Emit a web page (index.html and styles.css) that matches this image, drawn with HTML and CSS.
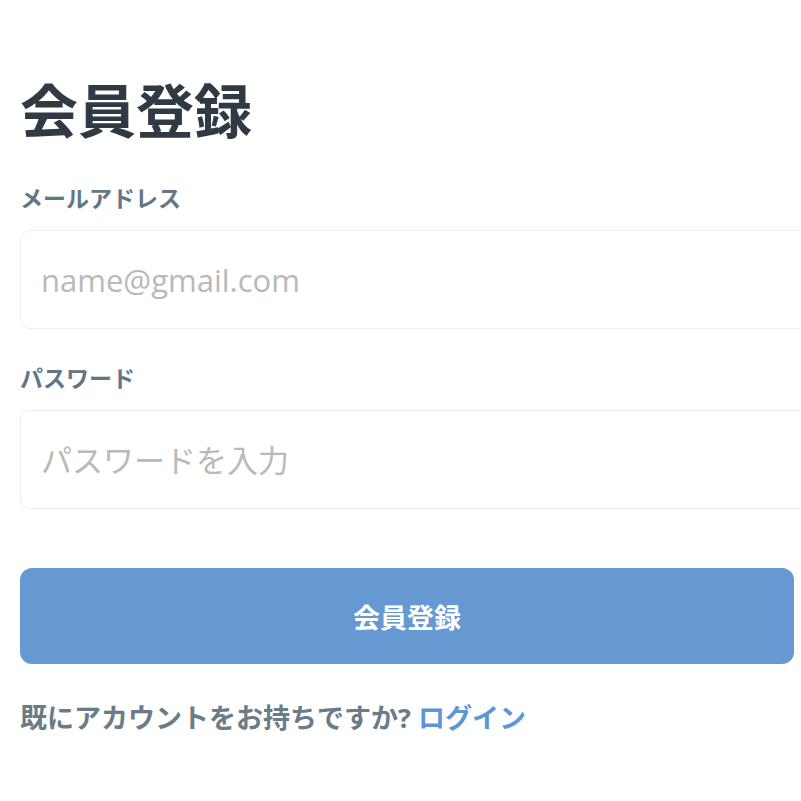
FILE: index.html
```
<!DOCTYPE html>
<html lang="ja">
<head>
    <meta charset="UTF-8">
    <meta name="viewport" content="width=device-width, initial-scale=1.0">
    <title>会員登録</title>
    <link rel="stylesheet" href="styles.css">
</head>
<body>

<div class="signup">
    <h1 class="title">会員登録</h1>

    <form id="signupForm">
        <label for="email">メールアドレス</label>
        <input type="email" id="email" name="email" placeholder="name@gmail.com">

        <label for="password">パスワード</label>
        <input type="password" id="password" name="password" placeholder="パスワードを入力">

        <button type="button">会員登録</button>
    </form>

    <p class="login">既にアカウントをお持ちですか? <a href="#">ログイン</a></p>
</div>

</body>
</html>
```

FILE: styles.css
```
body {
    font-family: 'Open Sans', 'Noto Sans CJK JP', sans-serif;
    background-color: #fff;
    margin: 0;
    padding: 0;
    overflow: hidden;
}

.signup {
    width: 774px;
    padding: 76px 0 0 20px;
}

.title {
    font-size: 58px;
    line-height: 70px;
    font-weight: 700;
    color: #2f3a45;
    margin: 0 0 36px;
}

form {
    display: flex;
    flex-direction: column;
}

label {
    font-size: 23px;
    line-height: 32px;
    font-weight: 700;
    color: #627685;
    margin-bottom: 16px;
}

input {
    width: 100%;
    height: 97px;
    padding: 0 20px;
    margin-bottom: 33px;
    border: 1px solid #eeeeee;
    border-radius: 10px;
    font-family: inherit;
    font-size: 31px;
    color: #333;
    background: #fff;
}

input::placeholder {
    color: #b9b9b9;
}

button {
    margin-top: 26px;
    height: 96px;
    background-color: #6699d2;
    color: #fff;
    border: none;
    border-radius: 12px;
    font-family: inherit;
    font-size: 27px;
    font-weight: 700;
    cursor: pointer;
}

.login {
    margin: 33px 0 0;
    font-size: 27px;
    font-weight: 700;
    color: #6a7c88;
}

.login a {
    color: #5c97d5;
    text-decoration: none;
}
```
